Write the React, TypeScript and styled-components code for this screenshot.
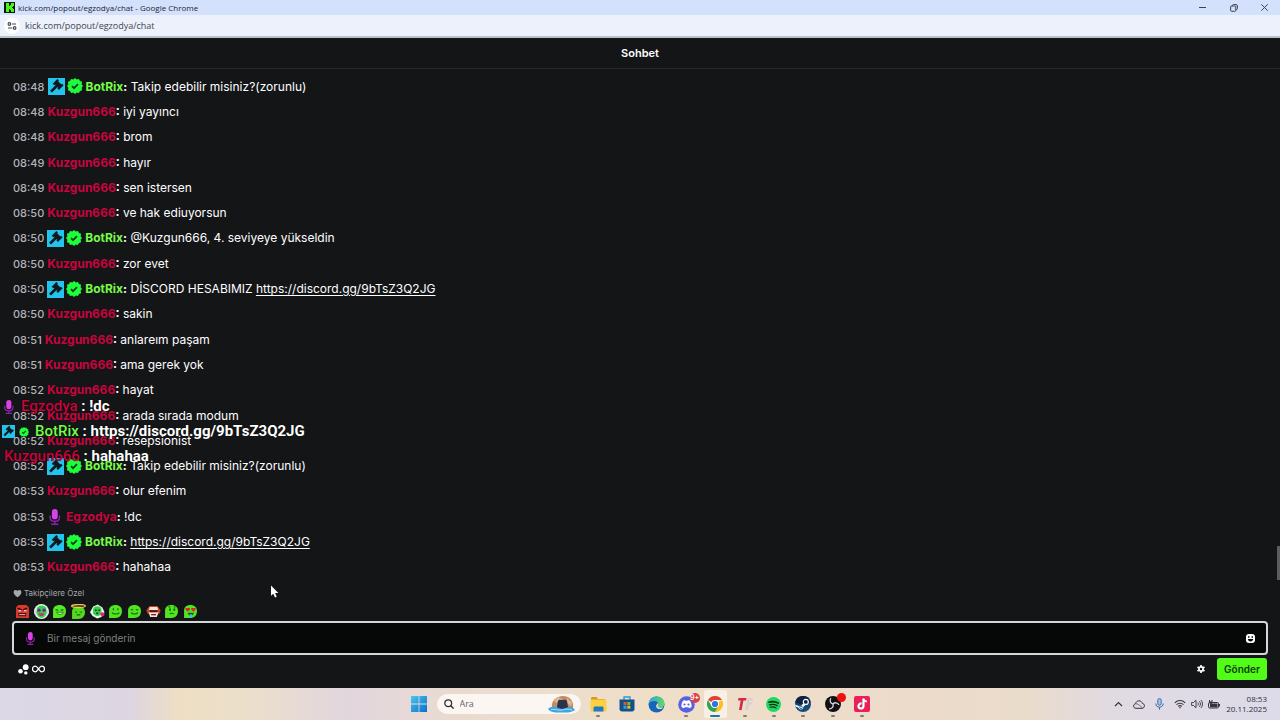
import React from 'react';
import styled, { createGlobalStyle } from 'styled-components';

const GlobalStyle = createGlobalStyle`
  * { box-sizing: border-box; }
  body { margin: 0; background: #141517; font-family: Inter, "Liberation Sans", sans-serif; }
  button, input { font-family: inherit; margin: 0; padding: 0; border: 0; background: none; color: inherit; }
  button { display: inline-flex; align-items: center; justify-content: center; cursor: pointer; }
  svg { display: block; flex: none; }
`;

const Window = styled.div`
  position: relative;
  display: flex;
  flex-direction: column;
  min-height: 100vh;
`;

/* ---------- browser chrome ---------- */
const TitleBar = styled.header`
  display: flex;
  align-items: center;
  justify-content: space-between;
  height: 15px;
  padding: 0 10px 0 4px;
  background: #d4e1fc;
`;
const PageTitle = styled.div`
  display: flex;
  align-items: center;
  gap: 3px;
  font: 400 8px/15px "Open Sans", "Noto Sans", sans-serif;
  color: #1c2230;
`;
const WindowButtons = styled.div`
  display: flex;
  gap: 20px;
  color: #3b4252;
`;
const WindowButton = styled.button`
  width: 11px;
  height: 15px;
`;
const AddressBar = styled.div`
  display: flex;
  align-items: center;
  gap: 5px;
  height: 23px;
  padding: 0 4px;
  background: #ecf1fc;
  border-bottom: 2px solid #bcc2c8;
`;
const SiteInfo = styled.button`
  width: 16px;
  height: 16px;
  border-radius: 50%;
  background: #fff;
  color: #444a52;
`;
const AddressInput = styled.input`
  flex: 1;
  font: 400 9px/16px "Open Sans", "Noto Sans", sans-serif;
  color: #43464e;
  outline: none;
`;

/* ---------- chat ---------- */
const Chat = styled.main`
  position: relative;
  flex: 1;
  display: flex;
  flex-direction: column;
  background: #141517;
  color: #fff;
`;
const ChatHeader = styled.h1`
  margin: 0;
  height: 31px;
  border-bottom: 1px solid #26292c;
  font-size: 11px;
  line-height: 30px;
  font-weight: 600;
  text-align: center;
`;
const Messages = styled.ul`
  flex: 1;
  display: grid;
  grid-auto-rows: minmax(25px, 1fr);
  margin: 0;
  padding: 5px 13px 0;
  list-style: none;
`;
const Message = styled.li`
  display: flex;
  align-items: center;
  gap: 3px;
  font-size: 12px;
  line-height: 18px;
  white-space: pre;
`;
const Time = styled.time`
  font-size: 11px;
  font-weight: 500;
  color: #b0b4b8;
`;
const Badges = styled.span`
  display: flex;
  gap: 2px;
`;
const Name = styled.b<{ $color: string }>`
  font-weight: 700;
  color: ${(p) => p.$color};
`;
const Body = styled.span``;
const Link = styled.a`
  color: #fff;
  text-underline-offset: 2px;
`;
const ScrollThumb = styled.div`
  position: absolute;
  right: 0;
  bottom: 108px;
  width: 3px;
  height: 34px;
  background: #5b5e61;
`;

const Composer = styled.form`
  display: flex;
  flex-direction: column;
  padding: 5px 12px 8px;
`;
const Notice = styled.p`
  display: flex;
  align-items: center;
  gap: 2px;
  margin: 0;
  padding-left: 1px;
  height: 16px;
  font-size: 8px;
  line-height: 16px;
  color: #a5a9ad;
`;
const Emotes = styled.div`
  display: grid;
  grid-template-columns: repeat(10, 1fr);
  width: 187px;
  height: 20px;
  margin-left: 1px;
`;
const InputFrame = styled.div`
  display: flex;
  align-items: center;
  gap: 10px;
  height: 34px;
  padding: 0 11px 0 10px;
  border: 2px solid #d5d6d6;
  border-radius: 4px;
  background: #060807;
`;
const MessageInput = styled.input`
  flex: 1;
  font-size: 10px;
  line-height: 18px;
  color: #fff;
  outline: none;
  &::placeholder { color: #7d8083; opacity: 1; }
`;
const ComposerFooter = styled.div`
  display: flex;
  align-items: center;
  gap: 3px;
  height: 22px;
  margin-top: 3px;
  padding: 0 1px 0 6px;
`;
const Spacer = styled.span`
  flex: 1;
`;
const SendButton = styled.button`
  width: 50px;
  height: 22px;
  && { margin-left: 9px; background: #53fc18; }
  border-radius: 3px;
  color: #0e3a06;
  font-size: 10px;
  font-weight: 600;
`;

/* ---------- stream overlay ---------- */
const Overlay = styled.div`
  position: absolute;
  left: 2px;
  top: 356px;
  display: grid;
  grid-auto-rows: 25px;
  align-items: center;
  font: 700 15px/25px Roboto, sans-serif;
  text-shadow: 0 0 1px #000;
  white-space: pre;
`;
const OverlayRow = styled.div`
  display: flex;
  align-items: center;
  gap: 4px;
`;
const OverlayText = styled.span<{ $indent: number }>`
  padding-left: ${(p) => p.$indent}px;
`;
const OverlayName = styled.span<{ $color: string }>`
  font-weight: 500;
  color: ${(p) => p.$color};
`;
const Pointer = styled.div`
  position: absolute;
  left: 270px;
  top: 547px;
`;

/* ---------- taskbar ---------- */
const Taskbar = styled.footer`
  display: grid;
  grid-template-columns: 1fr auto 1fr;
  align-items: center;
  height: 32px;
  background: linear-gradient(90deg, #dcd8e6, #ddd5e2 10%, #eedfc4 14%, #ecdfca 19%, #e2d6de 27%, #eadbd0 36%, #efdfc8 52%, #ecdbcb 72%, #eadccb 80%, #e0dae2 87%, #dddbe9);
`;
const Apps = styled.nav`
  grid-column: 2;
  display: flex;
  align-items: center;
  gap: 3px;
`;
const StartButton = styled.button`
  width: 30px;
  height: 28px;
`;
const Search = styled.label`
  display: flex;
  align-items: center;
  gap: 6px;
  width: 144px;
  height: 20px;
  padding: 0 5px 0 7px;
  border-radius: 10px;
  background: #fbf6f2;
  color: #2e2e33;
`;
const SearchInput = styled.input`
  flex: 1;
  min-width: 0;
  font: 400 9px/16px "Open Sans", sans-serif;
  outline: none;
  &::placeholder { color: #66646a; opacity: 1; }
`;
const AppGrid = styled.div`
  display: grid;
  grid-template-columns: repeat(10, 1fr);
  width: 293px;
`;
const AppButton = styled.button<{ $mark: 'none' | 'open' | 'active' }>`
  position: relative;
  height: 28px;
  && { margin: 0 3px; ${(p) => p.$mark === 'active' && 'background: #f9f0e5;'} }
  border-radius: 3px;
  &::after {
    content: '';
    position: absolute;
    bottom: 1px;
    left: 50%;
    transform: translateX(-50%);
    height: 2px;
    border-radius: 1px;
    width: ${(p) => (p.$mark === 'active' ? 10 : p.$mark === 'open' ? 4 : 0)}px;
    background: ${(p) => (p.$mark === 'active' ? '#1477b8' : '#857b71')};
  }
`;
const Count = styled.span`
  position: absolute;
  top: 3px;
  right: -2px;
  width: 10px;
  height: 10px;
  border-radius: 50%;
  background: #d8414c;
  color: #fff;
  font: 600 7px/10px Inter, sans-serif;
  text-align: center;
`;
const RecordDot = styled(Count)`
  width: 9px;
  height: 9px;
  background: #ee1111;
`;
const Tray = styled.div`
  display: flex;
  justify-content: flex-end;
  align-items: center;
  gap: 6px;
  padding-right: 13px;
  color: #34343c;
`;
const TrayIcons = styled.div`
  display: flex;
  align-items: center;
  gap: 10px;
`;
const QuickSettings = styled.button`
  gap: 5px;
`;
const Clock = styled.time`
  font: 400 8px/10px "Open Sans", sans-serif;
  text-align: right;
  color: #2f2f36;
`;

/* ---------- icons ---------- */
const KickLogo = () => (
  <svg width="11" height="11" viewBox="0 0 11 11" shapeRendering="crispEdges">
    <rect width="11" height="11" fill="#0b1a08" />
    <path fill="#45f51b" d="M2 1h3v3h1V3h1V1h3v3H9v1H8v1h1v1h1v3H7V8H6V7H5v3H2z" />
  </svg>
);
const TuneIcon = () => (
  <svg width="10" height="10" viewBox="0 0 10 10" fill="none" stroke="currentColor" strokeWidth="1.2">
    <circle cx="2.4" cy="3" r="1.3" />
    <path d="M5 3h4M1 7h4" />
    <circle cx="7.6" cy="7" r="1.3" />
  </svg>
);
const ModBadge = ({ size = 17 }: { size?: number }) => (
  <svg width={size} height={size} viewBox="0 0 17 17">
    <rect width="17" height="17" fill="#22c3ec" />
    <g fill="#10181d" transform="rotate(45 10.300 6.300)">
      <rect x="7" y="4.200" width="6.600" height="4.600" />
      <rect x="5.900" y="3.200" width="2.200" height="6.600" />
      <rect x="12.500" y="3.200" width="2.200" height="6.600" />
      <rect x="9" y="8" width="2.700" height="8.600" />
    </g>
  </svg>
);
const SEAL = 'M8 0l1.700 1.500L12 .9l.9 2.100 2.200.8-.5 2.400L16 8l-1.400 1.800.5 2.400-2.200.8-.9 2.100-2.300-.6L8 16l-1.700-1.500-2.300.6-.9-2.100-2.200-.8.5-2.400L0 8l1.400-1.800-.5-2.400L3.100 3l.9-2.100 2.300.6z';
const Verified = ({ size = 16 }: { size?: number }) => (
  <svg width={size} height={size} viewBox="0 0 16 16">
    <path fill="#1eff3c" d={SEAL} />
    <path fill="none" stroke="#0c3a14" strokeWidth="1.700" d="M5 8.200l2 2 4-4" />
  </svg>
);
const MicBadge = ({ size = 17 }: { size?: number }) => (
  <svg width={size} height={size} viewBox="0 0 17 17">
    <rect x="5.200" y="0" width="6.200" height="11" rx="3.100" fill="#d843e6" />
    <path fill="none" stroke="#8d1fb4" strokeWidth="1.500" d="M3.300 7v2c0 2.500 2 4.100 5 4.100s5-1.600 5-4.100V7M8.300 13v3M4.500 16.200h7.600" />
  </svg>
);
const Heart = () => (
  <svg width="9" height="9" viewBox="0 0 9 9">
    <path fill="#a5a9ad" d="M4.500 8.300C2.500 6.800.6 5.300.6 3.200.6 1.900 1.500 1 2.600 1c.8 0 1.500.4 1.900 1.100C4.900 1.400 5.600 1 6.400 1c1.100 0 2 .9 2 2.200 0 2.100-1.900 3.600-3.900 5.100z" />
  </svg>
);

const EmoteButton = styled.button`
  height: 20px;
`;
const BLOB = 'M1 13.500V6.500C1 3 3.500 1 7.300 1S13.500 3.300 13.500 7c0 3.900-2.700 6.500-6.500 6.500z';
type EmoteKind = 'rage' | 'clown' | 'smirk' | 'angel' | 'kiss' | 'happy' | 'grin' | 'mask' | 'think' | 'love';
const emoteFaces: Record<EmoteKind, React.ReactNode> = {
  rage: (
    <>
      <path fill="#d93a30" d="M1 13.500V3.500L3 1h8l2.500 2.500v10z" />
      <path d="M2.500 4l4 1.800M11.800 4l-4 1.800" stroke="#3a0805" strokeWidth="1.500" />
      <path d="M3.500 6.500h2.500M8.500 6.500H11" stroke="#fff" />
      <rect x="3.300" y="8.800" width="7.500" height="3" fill="#3a0805" />
      <path d="M4 10.300h6" stroke="#f3b5ac" />
    </>
  ),
  clown: (
    <>
      <circle cx="7.200" cy="7.200" r="7.200" fill="#e8f5ea" />
      <circle cx="2" cy="8" r="2" fill="#d9d3f0" />
      <circle cx="12.500" cy="8" r="2" fill="#d9d3f0" />
      <path fill="#35cf4e" d="M2.800 4c1-3.500 8-3.500 9 0l.5 4c-.5 3.500-3 5.500-5 5.500S2.800 11.500 2.300 8z" />
      <circle cx="4.800" cy="6" r="1.600" fill="#7b1f8f" />
      <circle cx="9.800" cy="6" r="1.600" fill="#7b1f8f" />
      <path fill="#d42a70" d="M4.500 9h5.500L8.500 11.500h-3z" />
    </>
  ),
  smirk: (
    <>
      <path fill="#55ea22" d={BLOB} />
      <path d="M3.500 5.500l2.500.6M8.500 6.100l2.500-.6" stroke="#17640d" strokeWidth="1.200" />
      <path fill="#c9f7be" stroke="#17640d" strokeWidth=".7" d="M4.500 8h6.500c-.4 1.500-1.600 2-3.200 2S4.900 9.500 4.500 8z" />
    </>
  ),
  angel: (
    <>
      <path fill="#55d91e" d="M1 14.500V7.500C1 4.300 3.500 2.500 7.300 2.500S13.500 4.500 13.500 8c0 3.800-2.500 6.500-6.500 6.500z" />
      <ellipse cx="7.200" cy="2" rx="6.600" ry="1.500" fill="none" stroke="#f0c651" strokeWidth="1.300" />
      <path fill="none" stroke="#17640d" d="M3.800 7.500c.6.700 1.500.7 2 0M8.500 7.500c.6.700 1.500.7 2 0M5.500 10.500h3.500" />
    </>
  ),
  kiss: (
    <>
      <path fill="#e9f6ec" d="M0 8 3 2.500 7.500.5l4.500 3 2 4.500-3 4.500L7 14 2.500 11.500z" />
      <path fill="#36cf4b" d="M3 4.500C4.500 1.500 9.500 1.500 11 4.500V9c-1 3.500-6.500 3.500-8 0z" />
      <path d="M4.800 6h1.700M8 6h1.700" stroke="#17400d" strokeWidth="1.400" />
      <circle cx="7" cy="9" r="1.100" fill="#17400d" />
      <circle cx="12" cy="10" r="2" fill="#dc2a86" />
    </>
  ),
  happy: (
    <>
      <path fill="#4fe520" d={BLOB} />
      <path d="M5.200 4v2M9.500 4v2" stroke="#17640d" strokeWidth="1.200" />
      <path fill="none" stroke="#17640d" d="M3.800 8.300c1.500 1.900 5.700 1.900 7.200 0" />
    </>
  ),
  grin: (
    <>
      <path fill="#4fe520" d={BLOB} />
      <path fill="none" stroke="#17640d" d="M3.800 6c.5-1 1.600-1 2 0M8.700 6c.5-1 1.600-1 2 0M4 8.300c1.400 1.700 5.100 1.700 6.500 0" />
    </>
  ),
  mask: (
    <>
      <path fill="#c6402f" d="M.3 6 3.500 2h7.500l3.200 4-1.200 3.500h-11.500z" />
      <path fill="#f7e3d2" d="M3.500 3h7.500l.8 3H2.800zM2.500 8h9.700l-1.700 4.500H4z" />
      <path d="M3.500 6.900h7.700" stroke="#531711" strokeWidth="2" />
      <path d="M5 10.300h4.700" stroke="#7b241c" strokeWidth="1.300" />
    </>
  ),
  think: (
    <>
      <path fill="#4fe520" d={BLOB} />
      <ellipse cx="5.800" cy="5.500" rx=".9" ry="1.300" fill="#17640d" />
      <ellipse cx="10" cy="5.500" rx=".9" ry="1.300" fill="#17640d" />
      <path fill="none" stroke="#17640d" d="M4.300 3.200l2-.6M9.500 2.600l1.600.6M5.500 9.500c1.300-.8 2.800-.8 4 0" />
    </>
  ),
  love: (
    <>
      <path fill="#4fe520" d={BLOB} />
      <path fill="#d8262a" d="M2.500 3.800h4.200v1.700L4.600 7.600 2.500 5.500zM8 3.800h4.200v1.700l-2.100 2.100L8 5.500z" />
      <path fill="#17640d" d="M4.500 8.500h6c-.5 2-1.500 2.800-3 2.800s-2.500-.8-3-2.800z" />
      <path fill="#4bb6ee" d="M6.500 10h2.300v3.500H6.500z" />
    </>
  ),
};
const Emote = ({ kind }: { kind: EmoteKind }) => (
  <EmoteButton type="button" aria-label={kind}>
    <svg width="15" height="15" viewBox="0 0 14.500 14.500">{emoteFaces[kind]}</svg>
  </EmoteButton>
);

const SmileIcon = () => (
  <svg width="9" height="9" viewBox="0 0 9 9">
    <rect width="9" height="9" rx="3" fill="#fff" />
    <path fill="#060807" d="M2 2.300h1.500v1.500H2zM5.500 2.300H7v1.500H5.500zM1.800 5h5.400c-.2 1.600-1.200 2.400-2.700 2.400S2 6.600 1.800 5z" />
  </svg>
);
const DotsIcon = () => (
  <svg width="11" height="11" viewBox="0 0 11 11" fill="#fff">
    <circle cx="7.700" cy="3.200" r="2.900" />
    <circle cx="2.500" cy="7.300" r="2.300" />
    <circle cx="7.800" cy="8.900" r="1.700" />
  </svg>
);
const InfinityIcon = () => (
  <svg width="13" height="8" viewBox="0 0 13 8" fill="none" stroke="#fff" strokeWidth="1.300">
    <path d="M6.500 4C5.200 2.200 4.500 1.200 3.300 1.200a2.700 2.700 0 0 0 0 5.600C4.500 6.800 5.200 5.800 6.500 4s2-2.800 3.200-2.800a2.700 2.700 0 0 1 0 5.600C8.500 6.800 7.800 5.800 6.500 4z" />
  </svg>
);
const GearIcon = () => (
  <svg width="8" height="8" viewBox="0 0 8 8">
    <circle cx="4" cy="4" r="2.100" fill="none" stroke="#fff" strokeWidth="1.700" />
    <path stroke="#fff" strokeWidth="1.700" d="M4 0v1.500M4 6.500V8M.5 2l1.300.8M6.200 5.200l1.300.8M.5 6l1.300-.8M6.200 2.800 7.500 2" />
  </svg>
);

const WindowsIcon = () => (
  <svg width="16" height="16" viewBox="0 0 16 16">
    <defs>
      <linearGradient id="win" x2="1" y2="1">
        <stop stopColor="#4cc6f2" />
        <stop offset="1" stopColor="#0670c8" />
      </linearGradient>
    </defs>
    <path fill="url(#win)" d="M0 0h7.600v7.600H0zM8.400 0H16v7.600H8.400zM0 8.400h7.600V16H0zM8.400 8.400H16V16H8.400z" />
  </svg>
);
const SearchIcon = () => (
  <svg width="10" height="10" viewBox="0 0 10 10" fill="none" stroke="currentColor" strokeWidth="1.300">
    <circle cx="4.200" cy="4.200" r="3.400" />
    <path d="m6.700 6.700 2.900 2.900" />
  </svg>
);
const SearchArt = () => (
  <svg width="28" height="18" viewBox="0 0 28 18">
    <path fill="#c58b62" d="M4 12C3 6 8 1 15 1s11 5 10 12z" />
    <path fill="#e2b691" d="M6 5l4-3 4 2-6 4zM19 3l5 4-1 4-4-3z" />
    <path fill="#29344b" d="M9 12l1-6c1-2 3-1 4-1s4-1 5 1l1 6 4 2-8 3-10-1z" />
    <path fill="#3aa5e3" d="M0 14c3-3 6-2 8-2l6 2 7-2c3 0 5 1 6 3-4 3-8 2.500-13 2.500S3 18 0 14z" />
    <path fill="none" stroke="#a9e0fa" d="M3 14.500c4-1 7 1.500 11 .5s6-1.500 10 0" />
  </svg>
);
const FolderIcon = () => (
  <svg width="17" height="15" viewBox="0 0 17 15">
    <path fill="#d79a1f" d="M1 1.500C1 .7 1.500 0 2.500 0h4L8 2h7v4H1z" />
    <rect x="0.500" y="2.500" width="16" height="12" rx="1.200" fill="#fbd043" />
    <path fill="#1f7cc4" d="M3.500 14.500V11c0-.8.500-1.500 1.500-1.500h7c1 0 1.500.7 1.500 1.500v3.500z" />
  </svg>
);
const StoreIcon = () => (
  <svg width="16" height="16" viewBox="0 0 16 16">
    <path fill="none" stroke="#2c9bd6" strokeWidth="1.400" d="M5 4V1h6v3" />
    <path fill="#12508a" d="M.5 3.500h15V13c0 1.500-1 2.500-2.500 2.500H3C1.500 15.500.5 14.500.5 13z" />
    <path fill="#ee4e2a" d="M4.500 6h3v3h-3z" />
    <path fill="#7fba22" d="M8.300 6h3v3h-3z" />
    <path fill="#29a5ec" d="M4.500 9.700h3v3h-3z" />
    <path fill="#fcb813" d="M8.300 9.700h3v3h-3z" />
  </svg>
);
const EdgeIcon = () => (
  <svg width="17" height="17" viewBox="0 0 17 17">
    <defs>
      <linearGradient id="edge" x2="1" y2=".3">
        <stop stopColor="#2aa6dc" />
        <stop offset="1" stopColor="#5fd66a" />
      </linearGradient>
    </defs>
    <circle cx="8.500" cy="8.500" r="8" fill="#1566b8" />
    <path fill="url(#edge)" d="M.5 8C1 3.500 4.500.5 8.500.5c5 0 8 3.500 8 7 0 2.500-2 4-4 4-1.800 0-2.800-.6-2.800-1.300 0-.5.800-.8.800-2C10.500 6.500 8.700 5 6.500 5 3.500 5 1.300 6.500.5 8z" />
    <path fill="#e9dfd0" d="M10 7c.8 1.200.2 2.400-.2 3 0 1 1.300 1.700 3 1.700 1.200 0 2-.3 2.700-.7-1 2-3 2.300-4.500 2C8 12.500 7 9.500 10 7z" />
  </svg>
);
const DiscordIcon = () => (
  <svg width="17" height="17" viewBox="0 0 17 17">
    <circle cx="8.500" cy="8.500" r="8.300" fill="#5762e3" />
    <path fill="#fff" d="M5 4.800c1-.5 1.800-.6 2.200-.6l.3.600h2l.3-.6c.4 0 1.200.1 2.200.6 1.300 2 1.700 4 1.500 6.200-.8.700-1.700 1-2.500 1.200l-.6-1H6.600l-.6 1c-.8-.2-1.700-.5-2.500-1.200C3.300 8.800 3.700 6.800 5 4.800z" />
    <circle cx="6.500" cy="8.500" r="1.100" fill="#5762e3" />
    <circle cx="10.500" cy="8.500" r="1.100" fill="#5762e3" />
  </svg>
);
const ChromeIcon = () => (
  <svg width="16" height="16" viewBox="0 0 16 16">
    <path fill="#e34133" d="M8 8 1.070 4A8 8 0 0 1 14.930 4H8z" />
    <path fill="#fbc116" d="M8 8l6.930-4A8 8 0 0 1 8 16l3.460-6z" />
    <path fill="#32a350" d="M8 16A8 8 0 0 1 1.070 4l3.470 6L8 12l3.460-2z" />
    <circle cx="8" cy="8" r="4" fill="#fff" />
    <circle cx="8" cy="8" r="3.100" fill="#2f74e0" />
  </svg>
);
const TfIcon = () => (
  <svg width="16" height="12" viewBox="0 0 16 12">
    <path fill="#d52a45" d="M1.500 0h8L9 2.600H6.400L4.700 12H2l1.700-9.400H1z" />
    <path fill="#d9cfd0" d="M10.500 0H16l-.5 2.500h-3l-.3 2h2.600l-.4 2.300h-2.600L11 12H8.400z" />
  </svg>
);
const SpotifyIcon = () => (
  <svg width="15" height="15" viewBox="0 0 15 15" fill="none" stroke="#0c2c15" strokeLinecap="round">
    <circle cx="7.500" cy="7.500" r="7.500" fill="#20d760" stroke="none" />
    <path strokeWidth="1.600" d="M3 5.200c3-.9 6.500-.6 9.200.9" />
    <path strokeWidth="1.300" d="M3.500 7.800c2.600-.7 5.400-.4 7.600.8" />
    <path strokeWidth="1.100" d="M4 10.200c2-.5 4.300-.3 6 .7" />
  </svg>
);
const SteamIcon = () => (
  <svg width="16" height="16" viewBox="0 0 16 16">
    <circle cx="8" cy="8" r="8" fill="#144a7c" />
    <path fill="#0d2340" d="M.2 6.500A8 8 0 0 1 15.600 5.500L11 10z" />
    <path fill="#fff" d="M0 8.500l4 1.700 2.300-.4L8.500 7 13 7.500 8.500 10.500c0 2-1 3-2.500 3S3.600 12.400 3.400 11.500L.6 10.400z" />
    <circle cx="10.800" cy="5.900" r="2.500" fill="#0d2340" stroke="#fff" strokeWidth="1.200" />
    <circle cx="6" cy="11.300" r="1.300" fill="none" stroke="#144a7c" strokeWidth=".8" />
  </svg>
);
const ObsIcon = () => (
  <svg width="16" height="16" viewBox="0 0 16 16">
    <circle cx="8" cy="8" r="8" fill="#111114" />
    <g fill="none" stroke="#d9d9dc" strokeWidth="1.300">
      <path d="M8 8C5.500 7.500 4.300 5 5.800 2.300" />
      <path d="M8 8c1.700-1.900 4.600-1.700 6 1" />
      <path d="M8 8c.8 2.500-.8 4.900-4 4.800" />
    </g>
  </svg>
);
const TiktokIcon = () => (
  <svg width="16" height="16" viewBox="0 0 16 16">
    <rect width="16" height="16" rx="2" fill="#ef1f56" />
    <path fill="none" stroke="#6adfe0" strokeWidth="1.900" d="M7.200 7.500C5.500 7.300 4.200 8.500 4.200 10s1.100 2.500 2.500 2.500 2.500-1.100 2.500-2.500V2.800" />
    <path fill="none" stroke="#fff" strokeWidth="1.900" d="M7.600 7.500C5.900 7.300 4.600 8.500 4.600 10s1.100 2.500 2.500 2.500 2.500-1.100 2.500-2.500V2.500c.2 1.900 1.300 2.900 3.200 3" />
  </svg>
);
const ChevronIcon = () => (
  <svg width="9" height="6" viewBox="0 0 9 6" fill="none" stroke="currentColor" strokeWidth="1.200">
    <path d="m1 5 3.500-3.500L8 5" />
  </svg>
);
const CloudIcon = () => (
  <svg width="12" height="9" viewBox="0 0 12 9" fill="none" stroke="currentColor">
    <path d="M3 8.300C1.500 8.300.6 7.300.6 6c0-1.200.9-2.100 2-2.200C2.900 2 4.200.8 6 .8c1.700 0 2.900 1 3.300 2.600 1.200.1 2.100 1 2.100 2.400 0 1.500-1 2.500-2.400 2.500z" />
    <path strokeWidth=".6" d="M3 4c2-.5 3 1 6.500 3.800" />
  </svg>
);
const TrayMic = () => (
  <svg width="9" height="12" viewBox="0 0 9 12" fill="none" stroke="#3c6dae">
    <rect x="2.800" y=".6" width="3.400" height="6.600" rx="1.700" fill="#a7c4e6" />
    <path d="M.8 5.500c0 2.200 1.500 3.700 3.700 3.700s3.700-1.500 3.700-3.700M4.500 9.200v2.500" />
  </svg>
);
const WifiIcon = () => (
  <svg width="12" height="10" viewBox="0 0 12 10" fill="none" stroke="currentColor" strokeWidth="1.100">
    <path d="M.8 3.800c3-3 7.400-3 10.400 0M2.500 5.700c2-2 5-2 7 0M4.200 7.400c1-1 2.600-1 3.600 0" />
    <circle cx="6" cy="8.800" r=".7" fill="currentColor" stroke="none" />
  </svg>
);
const SpeakerIcon = () => (
  <svg width="12" height="10" viewBox="0 0 12 10" fill="none" stroke="currentColor" strokeWidth=".9">
    <path d="M.6 3.500h1.900L5 1.200v7.600L2.500 6.500H.6zM6.700 3.500c.8.900.8 2.100 0 3M8.300 2.200c1.500 1.600 1.500 4 0 5.600M9.900 1c2.100 2.300 2.100 5.700 0 8" />
  </svg>
);
const BatteryIcon = () => (
  <svg width="12" height="9" viewBox="0 0 12 9">
    <rect x=".5" y="2.500" width="10" height="5.500" rx="1.200" fill="none" stroke="currentColor" />
    <path fill="currentColor" d="M2 3.500h7.500v3.800H2zM11 4h1v2.500h-1zM1 0h1v1.500h1.500V0h1v2.500L3 4 1 3z" />
  </svg>
);

/* ---------- data ---------- */
type User = 'bot' | 'kuzgun' | 'egzodya';
const users: Record<User, { name: string; color: string; badges: React.ReactNode }> = {
  bot: { name: 'BotRix', color: '#75fd46', badges: <><ModBadge /><Verified /></> },
  kuzgun: { name: 'Kuzgun666', color: '#c8043f', badges: null },
  egzodya: { name: 'Egzodya', color: '#c8043f', badges: <MicBadge size={16} /> },
};
const discord = 'https://discord.gg/9bTsZ3Q2JG';
const messages: { time: string; user: User; text: string; link?: string }[] = [
  { time: '08:48', user: 'bot', text: 'Takip edebilir misiniz?(zorunlu)' },
  { time: '08:48', user: 'kuzgun', text: 'iyi yayıncı' },
  { time: '08:48', user: 'kuzgun', text: 'brom' },
  { time: '08:49', user: 'kuzgun', text: 'hayır' },
  { time: '08:49', user: 'kuzgun', text: 'sen istersen' },
  { time: '08:50', user: 'kuzgun', text: 've hak ediuyorsun' },
  { time: '08:50', user: 'bot', text: '@Kuzgun666, 4. seviyeye yükseldin' },
  { time: '08:50', user: 'kuzgun', text: 'zor evet' },
  { time: '08:50', user: 'bot', text: 'DİSCORD HESABIMIZ ', link: discord },
  { time: '08:50', user: 'kuzgun', text: 'sakin' },
  { time: '08:51', user: 'kuzgun', text: 'anlareım paşam' },
  { time: '08:51', user: 'kuzgun', text: 'ama gerek yok' },
  { time: '08:52', user: 'kuzgun', text: 'hayat' },
  { time: '08:52', user: 'kuzgun', text: 'arada sırada modum' },
  { time: '08:52', user: 'kuzgun', text: 'resepsionist' },
  { time: '08:52', user: 'bot', text: 'Takip edebilir misiniz?(zorunlu)' },
  { time: '08:53', user: 'kuzgun', text: 'olur efenim' },
  { time: '08:53', user: 'egzodya', text: '!dc' },
  { time: '08:53', user: 'bot', text: '', link: discord },
  { time: '08:53', user: 'kuzgun', text: 'hahahaa' },
];
const emotes: EmoteKind[] = ['rage', 'clown', 'smirk', 'angel', 'kiss', 'happy', 'grin', 'mask', 'think', 'love'];
const apps: { label: string; icon: React.ReactNode; mark: 'none' | 'open' | 'active' }[] = [
  { label: 'Dosya Gezgini', icon: <FolderIcon />, mark: 'open' },
  { label: 'Microsoft Store', icon: <StoreIcon />, mark: 'none' },
  { label: 'Edge', icon: <EdgeIcon />, mark: 'none' },
  { label: 'Discord', icon: <><DiscordIcon /><Count>9+</Count></>, mark: 'open' },
  { label: 'Chrome', icon: <ChromeIcon />, mark: 'active' },
  { label: 'TF', icon: <TfIcon />, mark: 'open' },
  { label: 'Spotify', icon: <SpotifyIcon />, mark: 'open' },
  { label: 'Steam', icon: <SteamIcon />, mark: 'open' },
  { label: 'OBS', icon: <><ObsIcon /><RecordDot /></>, mark: 'open' },
  { label: 'TikTok', icon: <TiktokIcon />, mark: 'open' },
];

export default function App() {
  return (
    <Window>
      <GlobalStyle />
      <TitleBar>
        <PageTitle><KickLogo />kick.com/popout/egzodya/chat - Google Chrome</PageTitle>
        <WindowButtons>
          <WindowButton aria-label="Simge durumuna küçült">
            <svg width="7" height="7" viewBox="0 0 7 7"><path d="M0 3.500h7" stroke="currentColor" /></svg>
          </WindowButton>
          <WindowButton aria-label="Önceki boyut">
            <svg width="8" height="8" viewBox="0 0 8 8" fill="none" stroke="currentColor">
              <rect x=".6" y="2" width="5.200" height="5.300" rx="1" />
              <path d="M2.200 1.800C2.300 1 2.700.6 3.500.6H6c.9 0 1.400.5 1.400 1.400v2.400c0 .8-.4 1.200-1.200 1.300" />
            </svg>
          </WindowButton>
          <WindowButton aria-label="Kapat">
            <svg width="7" height="7" viewBox="0 0 7 7"><path d="m.3.3 6.400 6.400M6.700.3.3 6.700" stroke="currentColor" /></svg>
          </WindowButton>
        </WindowButtons>
      </TitleBar>
      <AddressBar>
        <SiteInfo aria-label="Site bilgileri"><TuneIcon /></SiteInfo>
        <AddressInput aria-label="Adres" defaultValue="kick.com/popout/egzodya/chat" />
      </AddressBar>

      <Chat>
        <ChatHeader>Sohbet</ChatHeader>
        <Messages>
          {messages.map((m, i) => {
            const user = users[m.user];
            return (
              <Message key={i}>
                <Time>{m.time}</Time>
                {user.badges && <Badges>{user.badges}</Badges>}
                <Body>
                  <Name $color={user.color}>{user.name}</Name>
                  <b>:</b> {m.text}
                  {m.link && <Link href={m.link}>{m.link}</Link>}
                </Body>
              </Message>
            );
          })}
        </Messages>
        <ScrollThumb />
        <Composer onSubmit={(e) => e.preventDefault()}>
          <Notice><Heart />Takipçilere Özel</Notice>
          <Emotes>{emotes.map((kind) => <Emote key={kind} kind={kind} />)}</Emotes>
          <InputFrame>
            <MicBadge size={13} />
            <MessageInput aria-label="Mesaj" placeholder="Bir mesaj gönderin" />
            <button type="button" aria-label="İfadeler"><SmileIcon /></button>
          </InputFrame>
          <ComposerFooter>
            <DotsIcon />
            <InfinityIcon />
            <Spacer />
            <button type="button" aria-label="Ayarlar"><GearIcon /></button>
            <SendButton type="submit">Gönder</SendButton>
          </ComposerFooter>
        </Composer>

        <Overlay>
          <OverlayRow>
            <MicBadge size={14} />
            <OverlayText $indent={1}><OverlayName $color="#c8043f">Egzodya</OverlayName> : !dc</OverlayText>
          </OverlayRow>
          <OverlayRow>
            <ModBadge size={13} />
            <Verified size={10} />
            <OverlayText $indent={2}><OverlayName $color="#75fd46">BotRix</OverlayName> : {discord}</OverlayText>
          </OverlayRow>
          <OverlayRow>
            <OverlayText $indent={2}><OverlayName $color="#c8043f">Kuzgun666</OverlayName> : hahahaa</OverlayText>
          </OverlayRow>
        </Overlay>
        <Pointer>
          <svg width="9" height="13" viewBox="0 0 9 13"><path fill="#fff" d="M1 .5v10.200l2.300-2 1.700 3.800 1.700-.8L5.100 8h3.200z" /></svg>
        </Pointer>
      </Chat>

      <Taskbar>
        <Apps>
          <StartButton aria-label="Başlat"><WindowsIcon /></StartButton>
          <Search>
            <SearchIcon />
            <SearchInput aria-label="Ara" placeholder="Ara" />
            <SearchArt />
          </Search>
          <AppGrid>
            {apps.map((a) => <AppButton key={a.label} aria-label={a.label} $mark={a.mark}>{a.icon}</AppButton>)}
          </AppGrid>
        </Apps>
        <Tray>
          <TrayIcons>
            <button aria-label="Gizli simgeler"><ChevronIcon /></button>
            <CloudIcon />
            <TrayMic />
            <QuickSettings aria-label="Hızlı ayarlar"><WifiIcon /><SpeakerIcon /><BatteryIcon /></QuickSettings>
          </TrayIcons>
          <Clock>08:53<br />20.11.2025</Clock>
        </Tray>
      </Taskbar>
    </Window>
  );
}
